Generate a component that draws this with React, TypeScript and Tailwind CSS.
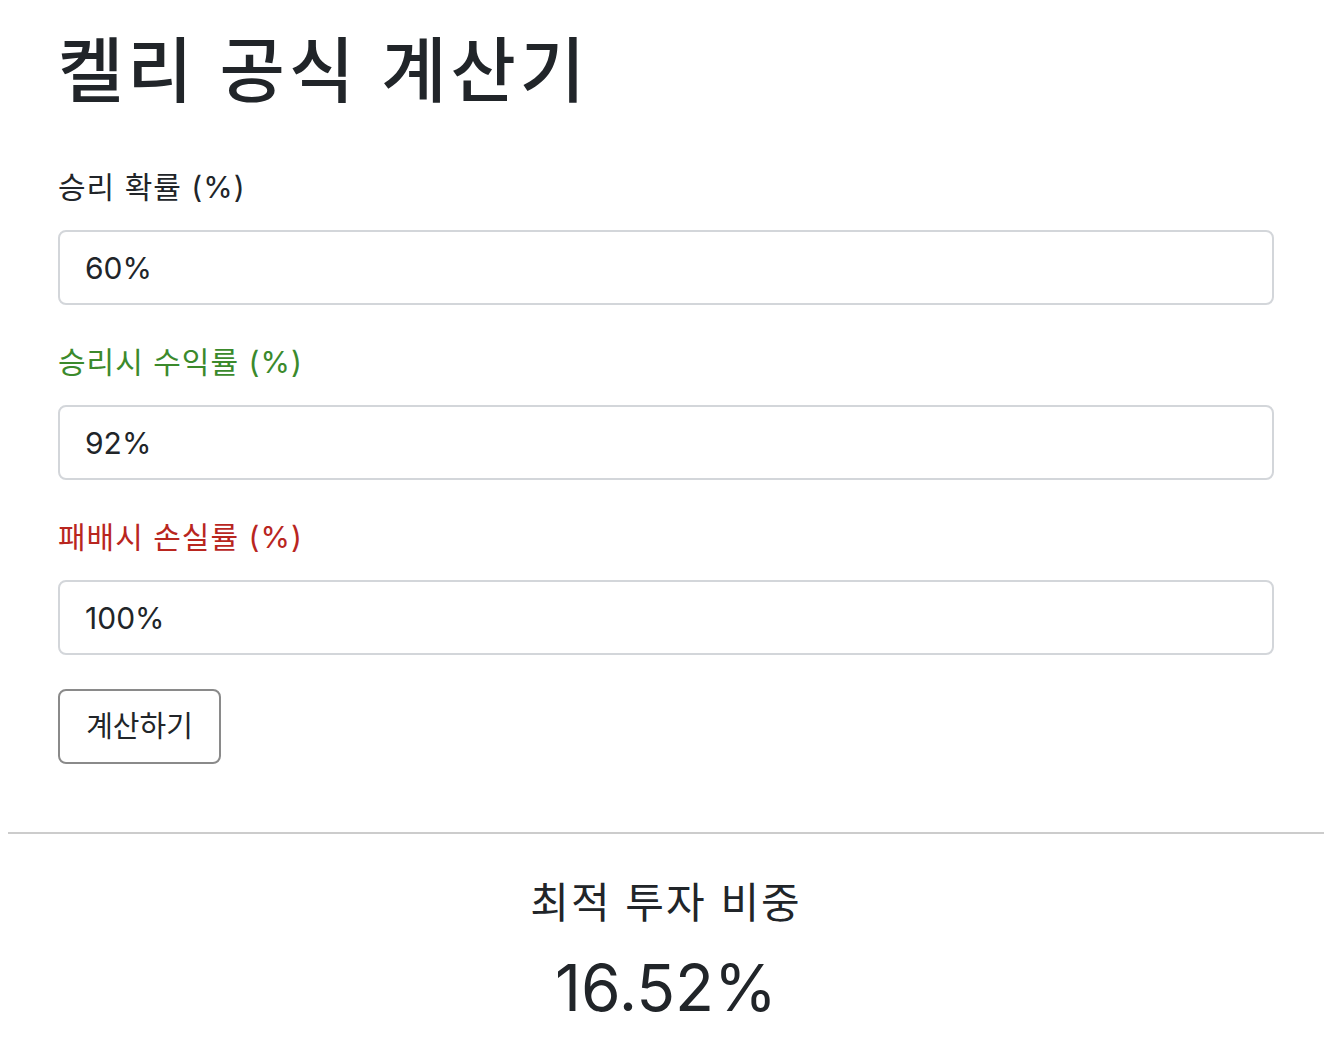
import { useState } from "react";

const font = { fontFamily: 'Inter, "Noto Sans CJK KR", sans-serif' };

function Field({ label, value, color, onChange }: { label: string; value: string; color: string; onChange: (v: string) => void }) {
  return (
    <div>
      <label className={`block text-[30px] leading-[45px] tracking-[1px] ${color}`}>{label}</label>
      <input
        value={value}
        onChange={(e) => onChange(e.target.value)}
        className="mt-[20px] block h-[75px] w-[1216px] rounded-[8px] border-2 border-[#d3d6da] bg-white px-[25px] text-[30px] text-[#212529] outline-none"
      />
    </div>
  );
}

export default function App() {
  const [p, setP] = useState("60%");
  const [win, setWin] = useState("92%");
  const [loss, setLoss] = useState("100%");
  const [result, setResult] = useState("16.52%");

  const calc = () => {
    const pv = parseFloat(p) / 100;
    const b = parseFloat(win) / 100;
    const a = parseFloat(loss) / 100;
    const f = pv / a - (1 - pv) / b;
    setResult(`${(f * 100).toFixed(2)}%`);
  };

  return (
    <div className="min-h-screen bg-white text-[#212529]" style={font}>
      <div className="pl-[58px] pt-[28px]">
        <h1 className="text-[71px] font-medium leading-[84px] tracking-[4px]">켈리 공식 계산기</h1>
        <div className="mt-[53px] flex flex-col gap-[35px]">
          <Field label="승리 확률 (%)" value={p} color="text-[#212529]" onChange={setP} />
          <Field label="승리시 수익률 (%)" value={win} color="text-[#3b8a2c]" onChange={setWin} />
          <Field label="패배시 손실률 (%)" value={loss} color="text-[#b9261f]" onChange={setLoss} />
        </div>
        <button
          onClick={calc}
          className="mt-[34px] h-[75px] w-[163px] rounded-[8px] border-2 border-[#8a8a8a] bg-white text-[29px] text-[#212529]"
        >
          계산하기
        </button>
      </div>
      <hr className="ml-[8px] mt-[68px] w-[1316px] border-t-2 border-[#cccccc]" />
      <div className="w-[1332px] text-center">
        <div className="mt-[44px] text-[42px] leading-[50px] tracking-[2px]">최적 투자 비중</div>
        <div className="mt-[21px] text-[64px] leading-[78px]">{result}</div>
      </div>
    </div>
  );
}
